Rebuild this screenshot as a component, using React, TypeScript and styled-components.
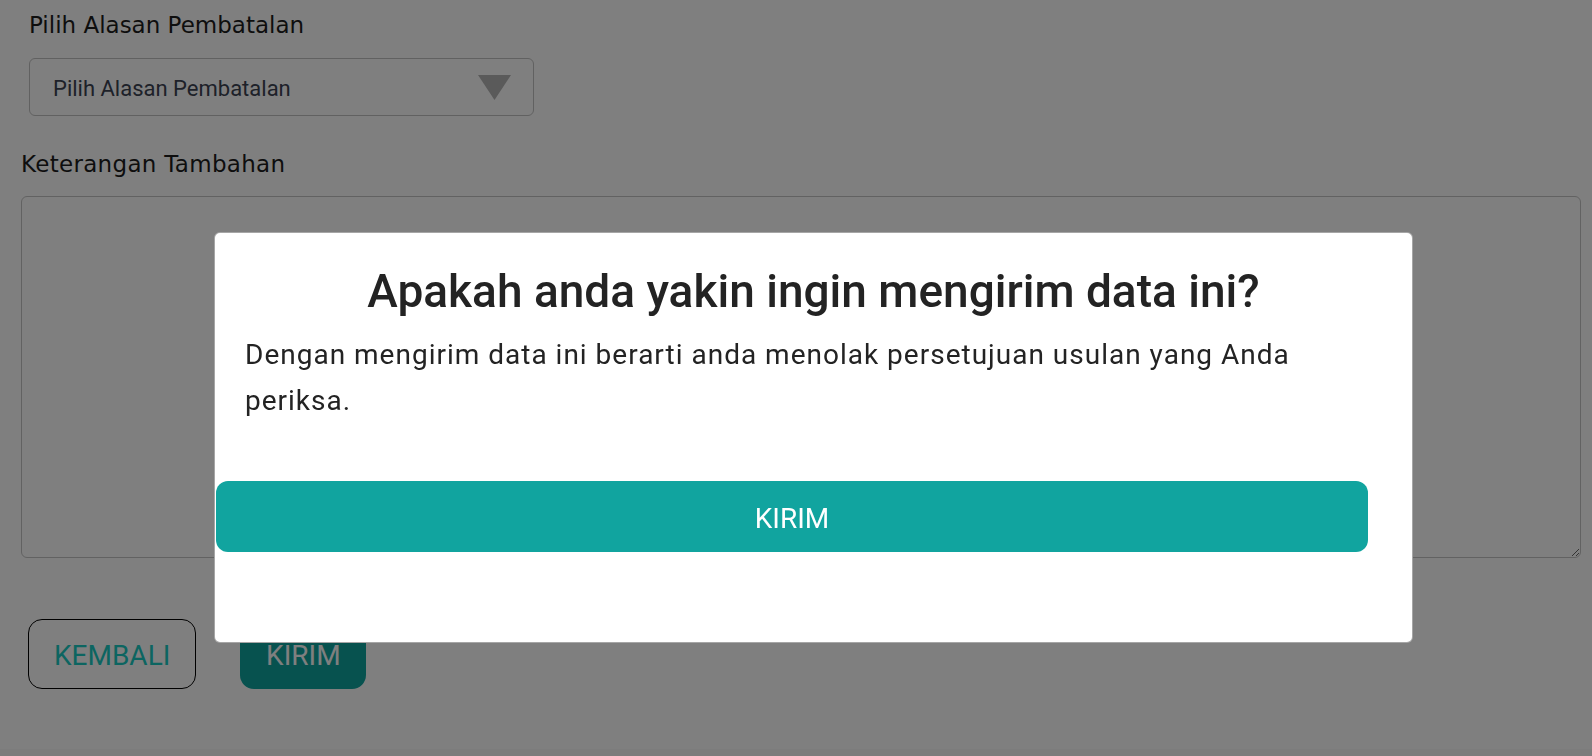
import React from "react";
import styled, { createGlobalStyle } from "styled-components";

const GlobalStyle = createGlobalStyle`
  html, body { margin: 0; padding: 0; }
  body { background: #f9f9f9; }
  * { box-sizing: border-box; }
`;

const Page = styled.main`
  min-height: 749px;
  background: #ffffff;
  padding: 8px 11px 0 21px;
  display: flex;
  flex-direction: column;
`;

const Field = styled.section<{ $indent?: number; $top?: number }>`
  display: flex;
  flex-direction: column;
  align-items: flex-start;
  padding-left: ${(p) => p.$indent ?? 0}px;
  margin-top: ${(p) => p.$top ?? 0}px;
`;

const Label = styled.label<{ $gap: number; $spacing?: number }>`
  font-family: "DejaVu Sans", "Inter", sans-serif;
  font-size: 23px;
  line-height: 34px;
  letter-spacing: ${(p) => p.$spacing ?? 0}px;
  color: #1c1c1c;
  margin-bottom: ${(p) => p.$gap}px;
`;

const SelectBox = styled.div`
  width: 505px;
  height: 58px;
  border: 1px solid #c2c2c2;
  border-radius: 6px;
  display: flex;
  align-items: center;
  justify-content: space-between;
  padding: 2px 22px 0 23px;
  background: #ffffff;
  font-family: "Roboto", sans-serif;
  font-size: 22px;
  color: #3c4352;
`;

const Arrow = styled.svg`
  width: 33px;
  height: 25px;
  flex: none;
  margin-top: -2px;
`;

const TextArea = styled.textarea`
  width: 100%;
  height: 362px;
  border: 1px solid #c4c4c4;
  border-radius: 6px;
  background: #ffffff;
  font-family: "Roboto", sans-serif;
  font-size: 18px;
  padding: 10px;
  margin: 0;
  display: block;
`;

const Actions = styled.div`
  display: flex;
  gap: 44px;
  margin-top: 61px;
  padding-left: 7px;
`;

const BaseButton = styled.button`
  height: 70px;
  padding: 4px 25px 0;
  border-radius: 14px;
  font-family: "Roboto", sans-serif;
  font-size: 28px;
  line-height: 1;
  cursor: pointer;
`;

const OutlineButton = styled(BaseButton)`
  border: 1px solid #000000;
  background: transparent;
  color: #18cac2;
`;

const SolidButton = styled(BaseButton)`
  border: none;
  background: #0fa49f;
  color: #ffffff;
  width: 126px;
  padding: 4px 0 0;
`;

const Overlay = styled.div`
  position: fixed;
  inset: 0;
  background: rgba(0, 0, 0, 0.5);
`;

const Dialog = styled.div`
  position: absolute;
  left: 214px;
  top: 232px;
  width: 1199px;
  background: #ffffff;
  border: 1px solid rgba(0, 0, 0, 0.35);
  border-radius: 6px;
  padding: 32px 0 90px;
  display: flex;
  flex-direction: column;
  align-items: flex-start;
`;

const Title = styled.h2`
  align-self: stretch;
  margin: 0;
  text-align: center;
  font-family: "Roboto", sans-serif;
  font-weight: 500;
  font-size: 46px;
  line-height: 53px;
  color: #232323;
`;

const Message = styled.p`
  margin: 14px 0 0;
  padding: 0 80px 0 30px;
  font-family: "Roboto", sans-serif;
  font-size: 28px;
  line-height: 46px;
  letter-spacing: 1px;
  color: #232323;
`;

const ConfirmButton = styled.button`
  margin: 57px 0 0 1px;
  width: 1152px;
  height: 71px;
  border: none;
  border-radius: 12px;
  background: #11a49f;
  color: #ffffff;
  font-family: "Roboto", sans-serif;
  font-size: 28px;
  line-height: 1;
  padding: 4px 0 0;
  cursor: pointer;
`;

export default function App() {
  return (
    <>
      <GlobalStyle />
      <Page>
        <Field $indent={8}>
          <Label $gap={16}>Pilih Alasan Pembatalan</Label>
          <SelectBox>
            <span>Pilih Alasan Pembatalan</span>
            <Arrow viewBox="0 0 33 25">
              <polygon points="0,0 33,0 16.5,25" fill="#b4b4b4" />
            </Arrow>
          </SelectBox>
        </Field>
        <Field $top={31}>
          <Label $gap={15} $spacing={0.3}>Keterangan Tambahan</Label>
          <TextArea />
        </Field>
        <Actions>
          <OutlineButton>KEMBALI</OutlineButton>
          <SolidButton>KIRIM</SolidButton>
        </Actions>
      </Page>
      <Overlay>
        <Dialog role="dialog">
          <Title>Apakah anda yakin ingin mengirim data ini?</Title>
          <Message>
            Dengan mengirim data ini berarti anda menolak persetujuan usulan yang Anda periksa.
          </Message>
          <ConfirmButton>KIRIM</ConfirmButton>
        </Dialog>
      </Overlay>
    </>
  );
}
